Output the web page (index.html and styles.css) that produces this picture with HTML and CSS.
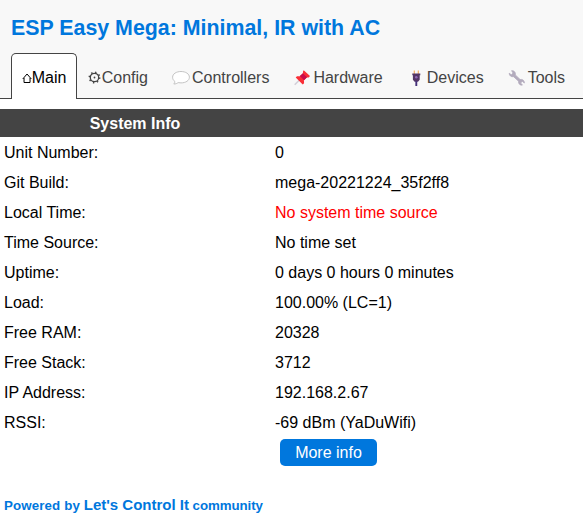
FILE: index.html
```html
<!DOCTYPE html>
<html lang="en">
<head>
<meta charset="utf-8">
<title>ESP Easy Mega</title>
<link rel="stylesheet" href="styles.css">
</head>
<body>
<header class="header">
  <h1 class="title">ESP Easy Mega: Minimal, IR with AC</h1>
  <nav class="menu">
    <a class="tab active"><svg class="icon home" viewBox="0 0 9 16"><path d="M.4 10 4.700 5 9 10M1.700 9v4.500h6V9" fill="none" stroke="#000"/></svg>Main</a>
    <a class="tab"><svg class="icon gear" viewBox="0 0 13 16"><g fill="none" stroke="#444"><circle cx="6.300" cy="8.500" r="4.200" stroke-width="1.300"/><circle cx="6.300" cy="8.500" r="5.200" stroke-width="1.500" stroke-dasharray="1.400 2.684"/></g><circle cx="6.300" cy="8.500" r=".9" fill="#444"/></svg>Config</a>
    <a class="tab"><svg class="icon" viewBox="0 0 22 16"><path d="M11 2.500c4.700 0 8.400 2.400 8.400 5.700s-3.700 5.700-8.400 5.700c-1 0-2-.1-2.900-.3-1 .8-2.500 1.500-4.300 1.400.8-.7 1.100-1.600 1-2.600C3.300 11.300 2.600 9.900 2.600 8.200c0-3.300 3.700-5.700 8.400-5.700Z" fill="#fff" stroke="#c4c4c4"/></svg>Controllers</a>
    <a class="tab"><svg class="icon" viewBox="0 0 22 16"><path d="m8.500 11-4.800 4.700" stroke="#d3cfd8" stroke-width="1.600"/><path d="m12.700 1.200 6.300 5.800-1.300 1.500-1.900-.1-2.900 2.900.2 3-1.400 1.300L4.700 8.600 6 7.200l2.900.1 3-2.800.1-2Z" fill="#f92f37"/><path d="m11.800 4.300 4.200 4-2.900 3-4.300-4.200Z" fill="#ca0b4a"/></svg>Hardware</a>
    <a class="tab"><svg class="icon" viewBox="0 0 22 16"><path d="M9.300 1.500v4M13.300 1.500v4" stroke="#f3ad61" stroke-width="1.200"/><path d="M7.300 4.500h8v1.700h-.6v4.600l-1.700 1.900H9.600l-1.700-1.900V6.200h-.6Z" fill="#533566"/><path d="M11.300 12v5" stroke="#46307a" stroke-width="1.900"/><circle cx="11.300" cy="8.300" r="1.300" fill="#8f67b5"/></svg>Devices</a>
    <a class="tab"><svg class="icon" viewBox="0 0 22 16"><path d="M6.200 1.700c2.500-.3 4.300 1.700 3.700 4.200l4.800 4.600c2.400-.6 4.400 1.100 4.300 3.500l-2.100-1.700-1.700 1.700 1.800 2.100c-2.400.4-4.300-1.500-3.800-3.900L8.200 7.700C5.700 8.200 3.800 6.500 3.800 4.200l2.100 1.600 1.800-1.700Z" fill="#b3abbd" stroke="#b3abbd" stroke-width=".8" stroke-linejoin="round" transform="translate(-.6)"/></svg>Tools</a>
  </nav>
</header>
<main>
  <table class="info">
    <tr><th>System Info</th><th></th></tr>
    <tr><td>Unit Number:</td><td>0</td></tr>
    <tr><td>Git Build:</td><td>mega-20221224_35f2ff8</td></tr>
    <tr><td>Local Time:</td><td class="warning">No system time source</td></tr>
    <tr><td>Time Source:</td><td>No time set</td></tr>
    <tr><td>Uptime:</td><td>0 days 0 hours 0 minutes</td></tr>
    <tr><td>Load:</td><td>100.00% (LC=1)</td></tr>
    <tr><td>Free RAM:</td><td>20328</td></tr>
    <tr><td>Free Stack:</td><td>3712</td></tr>
    <tr><td>IP Address:</td><td>192.168.2.67</td></tr>
    <tr><td>RSSI:</td><td>-69 dBm (YaDuWifi)</td></tr>
    <tr><td></td><td class="action"><a class="button">More info</a></td></tr>
  </table>
</main>
<footer class="footer"><span class="lead">Powered by </span><a class="link">Let's Control It</a><span class="tail"> community</span></footer>
</body>
</html>
```
FILE: styles.css
```css
* { box-sizing: border-box; }
body {
  margin: 0;
  background: #fff;
  color: #000;
  font: 16px/20px "Liberation Sans", Arial, sans-serif;
  overflow: hidden;
}
.header {
  height: 99px;
  padding: 15px 0 0 11px;
  background: #f8f8f8;
  border-bottom: 1px solid #444;
}
.title {
  margin: 0 0 12px;
  color: #07d;
  font-size: 21.36px;
  line-height: 26px;
  white-space: nowrap;
}
.menu { display: flex; }
.tab {
  display: flex;
  flex: none;
  height: 46px;
  padding: 14px 10px 0;
  border: 1px solid transparent;
  border-bottom: 0;
  border-radius: 5px 5px 0 0;
  color: #444;
}
.active {
  background: #fff;
  border-color: #444;
  color: #000;
}
.icon {
  flex: none;
  width: 22px;
  height: 16px;
  margin-top: 1px;
  overflow: visible;
}
.home { width: 9.7px; }
.gear { width: 13.4px; }
.info {
  width: 100%;
  margin-top: 10px;
  border-collapse: collapse;
  table-layout: fixed;
}
.info th {
  height: 28px;
  padding: 2px 0 0;
  background: #444;
  color: #fff;
}
.info th:first-child { width: 270px; }
.info td {
  height: 30px;
  padding: 2px 5px 0;
}
.info td:first-child { padding-left: 4px; }
.info .action { padding-top: 0; }
.info .warning { color: #f00; }
.button {
  display: block;
  width: 97px;
  height: 27px;
  margin-left: 5px;
  border-radius: 5px;
  background: #07d;
  color: #fff;
  line-height: 27px;
  text-align: center;
}
.footer {
  padding: 28px 4px 0;
  color: #07d;
  font-size: 13.3px;
  font-weight: bold;
}
.lead { letter-spacing: 0.13px; }
.tail { letter-spacing: -0.08px; }
.link { font-size: 15px; }
```
